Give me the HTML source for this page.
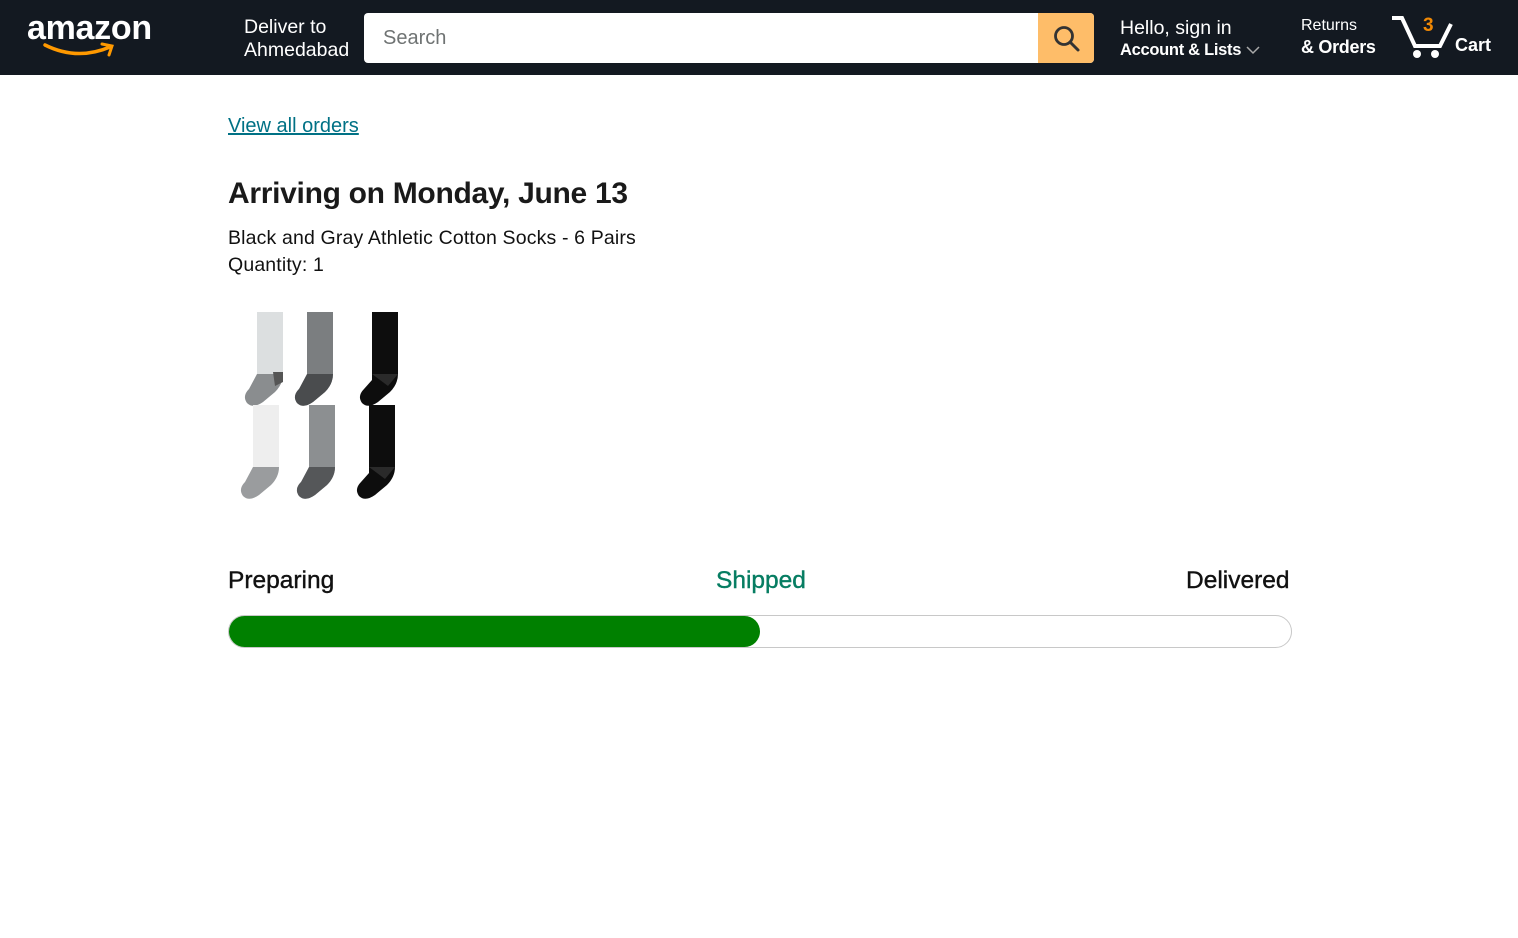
<!DOCTYPE html>
<html><head><meta charset="utf-8"><style>
*{margin:0;padding:0;box-sizing:border-box}
body{width:1518px;height:938px;background:#fff;font-family:"Liberation Sans",Arial,sans-serif;position:relative;overflow:hidden;color:#0f1111}
.hdr{position:absolute;left:0;top:0;width:1518px;height:75px;background:#131921;color:#fff}
.a{position:absolute;white-space:nowrap}
</style></head><body>
<div class="hdr">
  <div class="a" style="left:27px;top:9px;font-size:34px;font-weight:bold;letter-spacing:-0.3px;color:#fff">amazon</div>
  <svg class="a" style="left:42px;top:39px" width="75" height="22" viewBox="0 0 75 22"><path d="M3 6 Q35 22 68 8" stroke="#f90" stroke-width="3.5" fill="none" stroke-linecap="round"/><path d="M60 5 L70 7 L67 16" stroke="#f90" stroke-width="3" fill="none" stroke-linecap="round"/></svg>
  <div class="a" style="left:244px;top:16px;font-size:19.5px;line-height:23px">Deliver to<br>Ahmedabad</div>
  <div class="a" style="left:364px;top:13px;width:730px;height:50px;background:#fff;border-radius:4px"></div>
  <div class="a" style="left:383px;top:27px;font-size:20px;color:#6f7373">Search</div>
  <div class="a" style="left:1038px;top:13px;width:56px;height:50px;background:#febd69;border-radius:0 4px 4px 0"></div>
  <svg class="a" style="left:1052px;top:24px" width="30" height="30" viewBox="0 0 30 30"><circle cx="12" cy="12" r="8.5" stroke="#333" stroke-width="2.8" fill="none"/><path d="M18 18 L26 26" stroke="#333" stroke-width="3" stroke-linecap="round"/></svg>
  <div class="a" style="left:1120px;top:17px;font-size:19.5px">Hello, sign in</div>
  <div class="a" style="left:1120px;top:41px;font-size:16.5px;font-weight:bold;letter-spacing:-0.3px">Account &amp; Lists</div>
  <svg class="a" style="left:1246px;top:45px" width="14" height="10"><path d="M1 2 L7 8 L13 2" stroke="#aaa" stroke-width="1.5" fill="none"/></svg>
  <div class="a" style="left:1301px;top:17px;font-size:16px">Returns</div>
  <div class="a" style="left:1301px;top:37px;font-size:18px;font-weight:bold;letter-spacing:-0.3px">&amp; Orders</div>
  <svg class="a" style="left:1390px;top:14px" width="66" height="46" viewBox="0 0 66 46"><path d="M2 4 H12 L25 32 H50 L61 10" stroke="#fff" stroke-width="4" fill="none" stroke-linejoin="miter"/><circle cx="27" cy="40" r="4" fill="#fff"/><circle cx="45" cy="40" r="4" fill="#fff"/></svg>
  <div class="a" style="left:1423px;top:15px;font-size:19px;font-weight:bold;color:#f08804">3</div>
  <div class="a" style="left:1455px;top:35px;font-size:18px;font-weight:bold">Cart</div>
</div>
<div class="a" style="left:228px;top:115px;font-size:20px;color:#007185;text-decoration:underline">View all orders</div>
<div class="a" style="left:228px;top:177px;font-size:30px;font-weight:bold;color:#1a1a1a;letter-spacing:-0.3px">Arriving on Monday, June 13</div>
<div class="a" style="left:228px;top:225px;font-size:19.5px;line-height:27px;color:#111;letter-spacing:0.15px">Black and Gray Athletic Cotton Socks - 6 Pairs<br>Quantity: 1</div>
<svg class="a" style="left:225px;top:308px" width="180" height="195" viewBox="0 0 180 195">
  <defs><path id="s" d="M14 0 H40 V62 Q40 72 32 80 L20 90 Q10 97 4 91 Q-1 84 6 77 L14 68 Z"/></defs>
  <g transform="translate(18,4)"><use href="#s" fill="#dcdfe0"/><path d="M14 62 L40 62 Q40 72 32 80 L20 90 Q10 97 4 91 Q-1 84 6 77 Z" fill="#8a8d8f"/><path d="M30 60 H40 V70 L32 74Z" fill="#555"/></g>
  <g transform="translate(68,4)"><use href="#s" fill="#7b7e80"/><path d="M14 62 L40 62 Q40 72 32 80 L20 90 Q10 97 4 91 Q-1 84 6 77 Z" fill="#4a4c4e"/></g>
  <g transform="translate(133,4)"><use href="#s" fill="#0d0d0d"/><path d="M14 62 L40 62 L30 74 Z" fill="#2a2a2a"/></g>
  <g transform="translate(14,97)"><use href="#s" fill="#eeeeee"/><path d="M14 62 L40 62 Q40 72 32 80 L20 90 Q10 97 4 91 Q-1 84 6 77 Z" fill="#9a9c9e"/></g>
  <g transform="translate(70,97)"><use href="#s" fill="#8c8f91"/><path d="M14 62 L40 62 Q40 72 32 80 L20 90 Q10 97 4 91 Q-1 84 6 77 Z" fill="#555759"/></g>
  <g transform="translate(130,97)"><use href="#s" fill="#0d0d0d"/><path d="M14 62 L40 62 L30 74 Z" fill="#2a2a2a"/></g>
</svg>
<div class="a" style="left:228px;top:567px;font-size:24.5px;color:#111;-webkit-text-stroke:0.4px #111">Preparing</div>
<div class="a" style="left:716px;top:567px;font-size:24.5px;color:#067d62;-webkit-text-stroke:0.4px #067d62">Shipped</div>
<div class="a" style="left:1186px;top:567px;font-size:24.5px;color:#111;-webkit-text-stroke:0.4px #111">Delivered</div>
<div class="a" style="left:228px;top:615px;width:1064px;height:33px;border:1px solid #c8c8c8;border-radius:17px;background:#fff"></div>
<div class="a" style="left:229px;top:616px;width:531px;height:31px;border-radius:16px;background:#008000"></div>
</body></html>
